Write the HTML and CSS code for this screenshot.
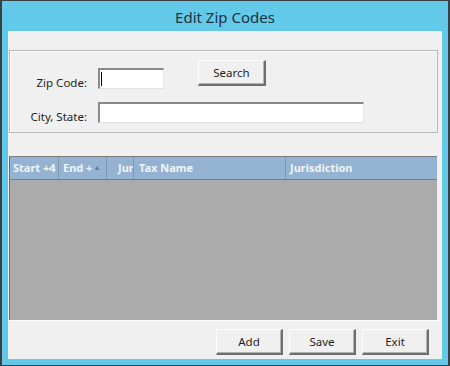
FILE: index.html
```html
<!DOCTYPE html>
<html lang="en">
<head>
    <meta charset="UTF-8">
    <meta name="viewport" content="width=device-width, initial-scale=1.0">
    <title>Edit Zip Codes</title>
    <link rel="stylesheet" href="styles.css">
</head>
<body>
    <div class="window">
        <div class="title">Edit Zip Codes</div>
        <div class="client">
            <div class="spacer-top"></div>

            <!-- search group -->
            <div class="group">
                <div class="row row-zip">
                    <label class="field-label">Zip Code:</label>
                    <div class="textbox textbox-zip"><span class="caret"></span></div>
                    <button type="button" class="btn btn-search">Search</button>
                </div>
                <div class="row row-city">
                    <label class="field-label">City, State:</label>
                    <div class="textbox textbox-city"></div>
                </div>
            </div>

            <!-- results grid -->
            <div class="grid">
                <div class="grid-head">
                    <div class="col col-start">Start +4</div>
                    <div class="col col-end">End +<span class="sort">&#9650;</span></div>
                    <div class="col col-jur">Juris</div>
                    <div class="col col-tax">Tax Name</div>
                    <div class="col col-jurisdiction">Jurisdiction</div>
                </div>
                <div class="grid-body"></div>
            </div>

            <div class="actions">
                <button type="button" class="btn btn-action">Add</button>
                <button type="button" class="btn btn-action">Save</button>
                <button type="button" class="btn btn-action">Exit</button>
            </div>
        </div>
    </div>
</body>
</html>
```

FILE: styles.css
```css
body {
    margin: 0;
    padding: 0;
    font-family: "Noto Sans", "Open Sans", sans-serif;
    font-size: 11.5px;
    color: #1e1e1e;
}
.window {
    width: 450px;
    height: 366px;
    box-sizing: border-box;
    background-color: #63c9e9;
    border-style: solid;
    border-color: #3b4045;
    border-width: 1px 2px 1px 2px;
    padding: 0 6px 6px 6px;
    display: flex;
    flex-direction: column;
}
.title {
    height: 30px;
    line-height: 32px;
    text-align: center;
    font-size: 15px;
    color: #1d3340;
}
.client {
    flex: 1;
    background-color: #f0f0f0;
    display: flex;
    flex-direction: column;
    padding-left: 1px;
}
.spacer-top {
    height: 19px;
}
.group {
    width: 429px;
    box-sizing: border-box;
    border: 1px solid #b9b9b9;
    box-shadow: inset 1px 1px 0 #fff;
    padding: 9px 0 9px 0;
}
.row {
    display: flex;
    align-items: flex-end;
}
.row-zip {
    height: 29px;
}
.row-city {
    margin-top: 13px;
}
.field-label {
    width: 77px;
    text-align: right;
    margin-right: 11px;
    line-height: 14px;
    margin-bottom: -1px;
}
.textbox {
    height: 21px;
    box-sizing: border-box;
    background-color: #fff;
    border-top: 2px solid #8a8a8a;
    border-left: 2px solid #8a8a8a;
    border-right: 1px solid #e3e3e3;
    border-bottom: 1px solid #e3e3e3;
    position: relative;
}
.textbox-zip {
    width: 66px;
}
.textbox-city {
    width: 266px;
}
.caret {
    position: absolute;
    left: 1px;
    top: 2px;
    width: 1px;
    height: 14px;
    background-color: #000;
}
.btn {
    font-family: inherit;
    font-size: 11.5px;
    color: #1e1e1e;
    background-color: #f0f0f0;
    box-sizing: border-box;
    height: 26px;
    padding: 0;
    border-style: solid;
    border-width: 1px 2px 2px 1px;
    border-color: #fcfcfc #6e6e6e #6e6e6e #fcfcfc;
    box-shadow: inset -1px -1px 0 #b4b4b4;
}
.btn-search {
    align-self: flex-start;
    width: 68px;
    margin-left: 34px;
}
.grid {
    width: 428px;
    margin-top: 23px;
    height: 164px;
    display: flex;
    flex-direction: column;
    box-sizing: border-box;
    border-top: 1px solid #7d7d7d;
    border-left: 1px solid #6a6a6a;
}
.grid-head {
    height: 22px;
    display: flex;
    background-color: #94b3d2;
    border-bottom: 1px solid #7d7d7d;
    color: #f0f4f8;
    font-weight: bold;
    font-size: 11px;
}
.col {
    box-sizing: border-box;
    height: 22px;
    line-height: 21px;
    white-space: nowrap;
    overflow: hidden;
    border-right: 1px solid #7d97b0;
    position: relative;
}
.col-start {
    width: 49px;
    padding-left: 3px;
}
.col-end {
    width: 48px;
    padding-left: 4px;
}
.sort {
    display: inline-block;
    margin-left: 1px;
    font-size: 7px;
    line-height: 21px;
    vertical-align: top;
    color: #5f7894;
}
.col-jur {
    width: 27px;
    padding-left: 11px;
}
.col-tax {
    width: 152px;
    padding-left: 5px;
}
.col-jurisdiction {
    flex: 1;
    padding-left: 4px;
    border-right: none;
}
.grid-body {
    flex: 1;
    background-color: #ababab;
}
.actions {
    flex: 1;
    display: flex;
    justify-content: flex-end;
    align-items: flex-start;
    gap: 6px;
    padding: 8px 13px 0 0;
    border-top: 1px solid #fbfbfb;
}
.btn-action {
    width: 67px;
}
```
